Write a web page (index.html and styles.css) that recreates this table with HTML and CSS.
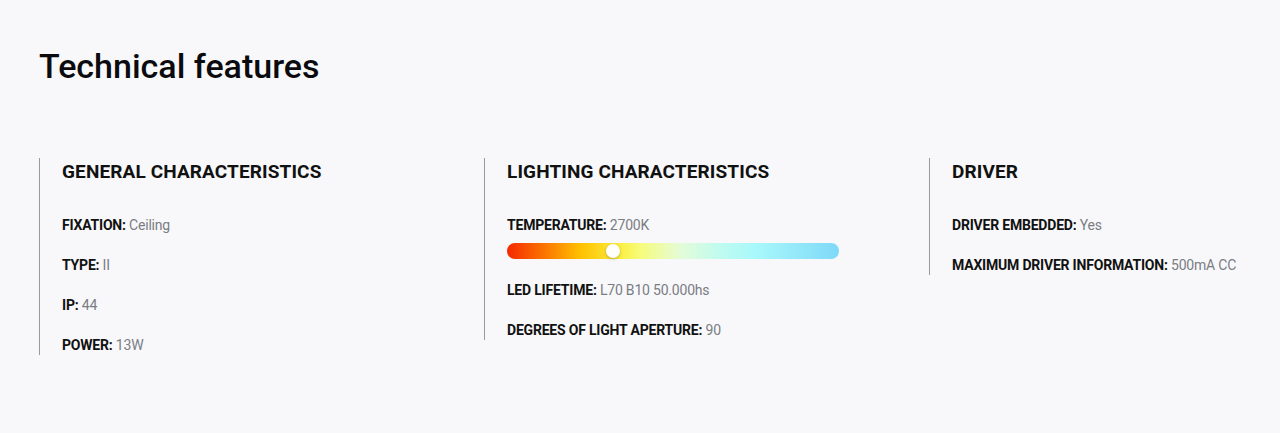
FILE: index.html
```html
<!DOCTYPE html>
<html lang="en">
<head>
<meta charset="utf-8">
<title>Technical features</title>
<link rel="stylesheet" href="styles.css">
</head>
<body>
<section class="features">
  <h1 class="title">Technical features</h1>
  <div class="columns">
    <div class="col">
      <h2 class="col-title">GENERAL CHARACTERISTICS</h2>
      <ul class="list">
        <li class="item"><b>FIXATION:</b> <span>Ceiling</span></li>
        <li class="item"><b>TYPE:</b> <span>II</span></li>
        <li class="item"><b>IP:</b> <span>44</span></li>
        <li class="item"><b>POWER:</b> <span>13W</span></li>
      </ul>
    </div>
    <div class="col">
      <h2 class="col-title">LIGHTING CHARACTERISTICS</h2>
      <ul class="list">
        <li class="item item-temp"><b>TEMPERATURE:</b> <span>2700K</span>
          <div class="temp-bar"><div class="temp-knob" style="left: 32%"></div></div>
        </li>
        <li class="item"><b>LED LIFETIME:</b> <span>L70 B10 50.000hs</span></li>
        <li class="item"><b>DEGREES OF LIGHT APERTURE:</b> <span>90</span></li>
      </ul>
    </div>
    <div class="col">
      <h2 class="col-title">DRIVER</h2>
      <ul class="list">
        <li class="item"><b>DRIVER EMBEDDED:</b> <span>Yes</span></li>
        <li class="item"><b>MAXIMUM DRIVER INFORMATION:</b> <span>500mA CC</span></li>
      </ul>
    </div>
  </div>
</section>
</body>
</html>
```
FILE: styles.css
```css
* { box-sizing: border-box; }
html, body {
  margin: 0;
  padding: 0;
  background: #f8f8fa;
  font-family: Roboto, "Liberation Sans", sans-serif;
  color: #111;
  overflow: hidden;
}
.features {
  padding: 44px 0 0 39px;
}
.title {
  margin: 0;
  font-size: 34px;
  font-weight: 500;
  line-height: 44px;
  color: #0b0b0f;
}
.columns {
  display: grid;
  grid-template-columns: 445px 445px 1fr;
  align-items: start;
  margin-top: 70px;
}
.col {
  border-left: 1px solid #9a9a9a;
  padding-left: 22px;
}
.col-title {
  margin: 0;
  font-size: 19px;
  font-weight: 700;
  line-height: 28px;
  letter-spacing: 0.12px;
  color: #111;
}
.list {
  list-style: none;
  margin: 29px 0 0;
  padding: 0;
  display: flex;
  flex-direction: column;
  gap: 20px;
}
.item {
  font-size: 14px;
  line-height: 20px;
  letter-spacing: -0.2px;
}
.item b {
  font-weight: 700;
  color: #111;
}
.item span {
  color: #7a7d84;
}
.temp-bar {
  position: relative;
  width: 332px;
  height: 16px;
  border-radius: 8px;
  margin: 8px 0 1px;
  background: linear-gradient(90deg, #f52800 0%, #fb7a00 12%, #ffc000 22%, #fbee40 34%, #f6fc7a 40%, #e4fcd6 52%, #c0fbf0 64%, #a8f8fb 75%, #7fd8f8 100%);
}
.temp-knob {
  position: absolute;
  top: 1px;
  width: 14px;
  height: 14px;
  margin-left: -7px;
  border-radius: 50%;
  background: #fff;
  box-shadow: 0 1px 3px rgba(0,0,0,0.25);
}
```
